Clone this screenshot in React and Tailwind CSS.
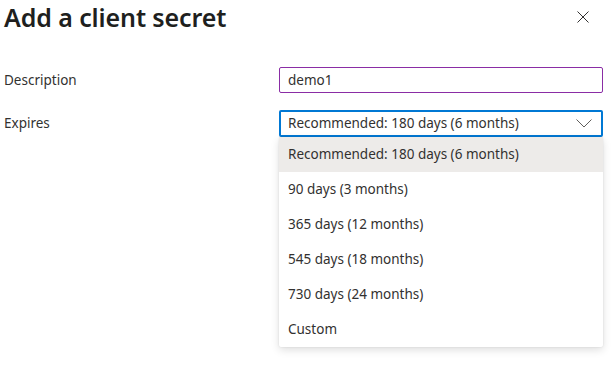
import React from "react";

const options = [
  "Recommended: 180 days (6 months)",
  "90 days (3 months)",
  "365 days (12 months)",
  "545 days (18 months)",
  "730 days (24 months)",
  "Custom",
];

export default function App() {
  return (
    <div
      className="w-[613px] h-[372px] bg-white text-[#323130] overflow-hidden relative"
      style={{ fontFamily: '"Noto Sans", "Open Sans", sans-serif' }}
    >
      <div className="flex items-start justify-between pl-[4px] pr-[24px] pt-[0px] h-[67px]">
        <h1 className="text-[25px] font-semibold leading-[34px] text-[#201f1e] tracking-[-0.1px]">
          Add a client secret
        </h1>
        <svg width="12" height="12" viewBox="0 0 12 12" className="mt-[11px]" fill="none">
          <path d="M0.5 0.5L11.5 11.5M11.5 0.5L0.5 11.5" stroke="#323130" strokeWidth="1" />
        </svg>
      </div>

      <div className="flex items-center pl-[4px] pr-[10px]">
        <div className="w-[275px] text-[13.5px]">Description</div>
        <div className="flex-1 h-[26px] border border-[#8a2da5] rounded-[2px] flex items-center pl-[8px] text-[13.5px]">
          demo1
        </div>
      </div>

      <div className="flex items-center pl-[4px] pr-[10px] mt-[17px]">
        <div className="w-[275px] text-[13.5px]">Expires</div>
        <div className="flex-1 relative">
          <div className="h-[27px] border-2 border-[#0078d4] rounded-[2px] flex items-center justify-between pl-[7px] pr-[9px] text-[13.5px]">
            <span>Recommended: 180 days (6 months)</span>
            <svg width="16" height="9" viewBox="0 0 16 9" fill="none">
              <path d="M0.5 0.5L8 8L15.5 0.5" stroke="#605e5c" strokeWidth="1" />
            </svg>
          </div>
          <div className="absolute left-0 right-0 top-[27px] bg-white rounded-[2px] shadow-[0_3px_8px_rgba(0,0,0,0.13),0_0_2px_rgba(0,0,0,0.11)] z-10">
            {options.map((o, i) => (
              <div
                key={o}
                className={`h-[35px] flex items-center pl-[9px] text-[13.5px] ${i === 0 ? "bg-[#edebe9]" : ""}`}
              >
                {o}
              </div>
            ))}
          </div>
        </div>
      </div>
    </div>
  );
}
